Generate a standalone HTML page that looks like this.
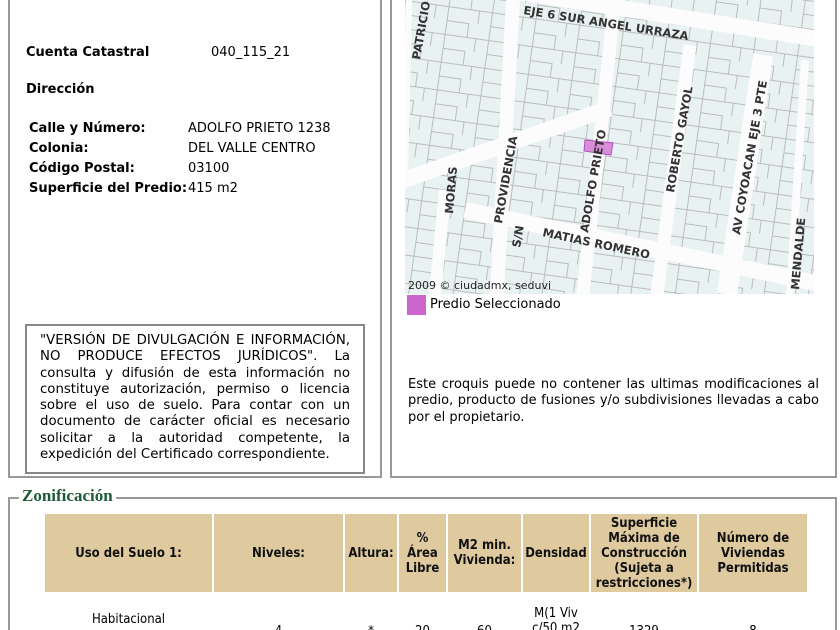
<!DOCTYPE html>
<html><head><meta charset="utf-8">
<style>
*{margin:0;padding:0;box-sizing:border-box}
html,body{width:840px;height:630px;overflow:hidden}
body{background:#fff;font-family:"DejaVu Sans","Liberation Sans",sans-serif;font-size:13px;color:#000;position:relative}
.abs{position:absolute}
.panel{position:absolute;border:2px solid #999;border-top:none}
.b{font-weight:bold}
.just{text-align:justify;line-height:16.3px;font-size:12.6px}
table{border-collapse:separate;border-spacing:2px}
th{background:#dfcaa0;font-family:"DejaVu Sans Condensed","DejaVu Sans",sans-serif;font-weight:bold;font-size:13px;line-height:15px;text-align:center;color:#111}
td{font-family:"DejaVu Sans Condensed","DejaVu Sans",sans-serif;font-size:13px;text-align:center;line-height:15px;vertical-align:middle}
</style></head><body>

<div class="panel" style="left:8px;top:-2px;width:374px;height:480px"></div>
<div class="panel" style="left:390px;top:-2px;width:447px;height:480px"></div>

<div class="abs b" style="left:26px;top:45px">Cuenta Catastral</div>
<div class="abs" style="left:211px;top:45px">040_115_21</div>
<div class="abs b" style="left:26px;top:82px">Dirección</div>
<div class="abs b" style="left:29px;top:119px;line-height:20px">Calle y Número:<br>Colonia:<br>Código Postal:<br>Superficie del Predio:</div>
<div class="abs" style="left:188px;top:119px;line-height:20px">ADOLFO PRIETO 1238<br>DEL VALLE CENTRO<br>03100<br>415 m2</div>

<div class="abs" style="left:25px;top:324px;width:340px;height:150px;border:2px solid #888"></div>
<div class="abs just" style="left:40px;top:333px;width:310px;font-size:13.3px">"VERSIÓN DE DIVULGACIÓN E INFORMACIÓN, NO PRODUCE EFECTOS JURÍDICOS". La consulta y difusión de esta información no constituye autorización, permiso o licencia sobre el uso de suelo. Para contar con un documento de carácter oficial es necesario solicitar a la autoridad competente, la expedición del Certificado correspondiente.</div>

<svg class="abs" style="left:405px;top:0" width="409" height="294" viewBox="0 0 409 294">
<defs>
<pattern id="p" width="44" height="28" patternUnits="userSpaceOnUse" patternTransform="rotate(8)">
<rect width="44" height="28" fill="#e9f2f2"/>
<path d="M0 0.5H44M0 14.5H22M0.5 0V28M22.5 14V28M31.5 0V14" stroke="#bcbcbc" stroke-width="1" fill="none"/>
</pattern>
</defs>
<rect width="409" height="294" fill="url(#p)"/>
<g stroke="#fcfcfc" fill="none">
<path d="M100 -10 L420 40" stroke-width="16"/>
<path d="M-10 183 L205 108" stroke-width="16"/>
<path d="M60 210 L420 285" stroke-width="16"/>
<path d="M108 0 L92 294" stroke-width="14"/>
<path d="M210 0 L178 294" stroke-width="13"/>
<path d="M285 45 L252 294" stroke-width="13"/>
<path d="M358 55 L322 294" stroke-width="20"/>
<path d="M40 190 L30 294" stroke-width="12"/>
<path d="M4 0 L0 180" stroke-width="6"/>
<path d="M400 60 L385 294" stroke-width="8"/>
</g>
<path d="M180 140 L208 143 L206 155 L179 151Z" fill="#d88ed8" stroke="#b24fc0" stroke-width="1"/>
<g font-family="DejaVu Sans,sans-serif" font-size="11.5" fill="#333" font-weight="bold">
<text transform="translate(118,14) rotate(9)">EJE 6 SUR ANGEL URRAZA</text>
<text transform="translate(15,60) rotate(-80)">PATRICIO</text>
<text transform="translate(48,214) rotate(-85)">MORAS</text>
<text transform="translate(97,224) rotate(-80)">PROVIDENCIA</text>
<text transform="translate(115,248) rotate(-80)">S/N</text>
<text transform="translate(183,233) rotate(-80)">ADOLFO PRIETO</text>
<text transform="translate(269,193) rotate(-80)">ROBERTO GAYOL</text>
<text transform="translate(335,235) rotate(-80)">AV COYOACAN EJE 3 PTE</text>
<text transform="translate(137,236) rotate(12)">MATIAS ROMERO</text>
<text transform="translate(394,290) rotate(-85)">MENDALDE</text>
</g>
<text x="3" y="289" font-family="DejaVu Sans,sans-serif" font-size="11" fill="#222">2009 © ciudadmx, seduvi</text>
</svg>
<div class="abs" style="left:407px;top:295px;width:19px;height:20px;background:#cc66cc"></div>
<div class="abs" style="left:430px;top:297px">Predio Seleccionado</div>

<div class="abs just" style="left:408px;top:377px;width:411px;font-size:13px">Este croquis puede no contener las ultimas modificaciones al predio, producto de fusiones y/o subdivisiones llevadas a cabo por el propietario.</div>

<div class="abs" style="left:8px;top:497px;width:829px;height:140px;border:2px solid #999;border-bottom:none"></div>
<div class="abs" style="left:19px;top:486px;background:#fff;padding:0 3px;font-family:'Liberation Serif',serif;font-weight:bold;font-size:17px;color:#1f5a3a">Zonificación</div>

<table class="abs" style="left:43px;top:512px;width:766px">
<tr style="height:78px">
<th style="width:167px">Uso del Suelo 1:</th>
<th style="width:129px">Niveles:</th>
<th style="width:52px">Altura:</th>
<th style="width:47px">%<br>Área<br>Libre</th>
<th style="width:73px">M2 min.<br>Vivienda:</th>
<th style="width:66px">Densidad</th>
<th style="width:106px">Superficie<br>Máxima de<br>Construcción<br>(Sujeta a<br>restricciones*)</th>
<th>Número de<br>Viviendas<br>Permitidas</th>
</tr>
<tr style="height:60px">
<td style="padding-top:6px">Habitacional<br><span style="color:#a02040;font-size:10px">Ver Tabla de Uso</span></td>
<td style="padding-top:14px">4</td><td style="padding-top:14px">-*-</td><td style="padding-top:14px">20</td><td style="padding-top:14px">60</td>
<td style="padding-top:8px">M(1 Viv<br>c/50 m2<br>)</td>
<td style="padding-top:14px">1329</td><td style="padding-top:14px">8</td>
</tr>
</table>
</body></html>
